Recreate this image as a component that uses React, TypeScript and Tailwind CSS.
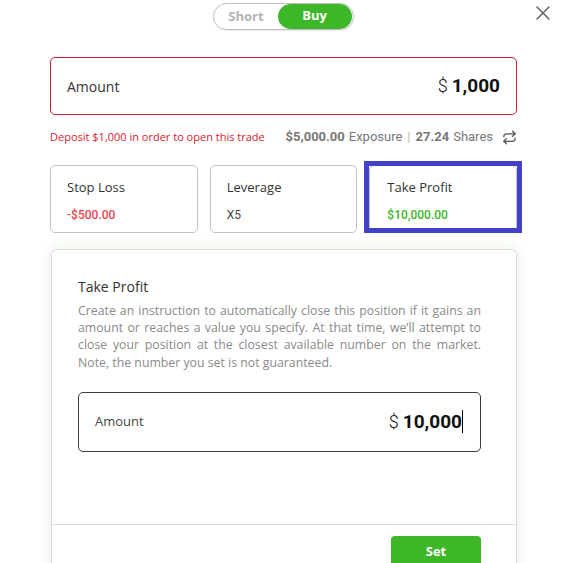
import React from "react";

const OS = { fontFamily: '"Open Sans", "Liberation Sans", sans-serif' };
const RB = { fontFamily: 'Roboto, "Liberation Sans", sans-serif' };

function RepeatIcon() {
  return (
    <svg width="15" height="15" viewBox="0 0 24 24" fill="none" stroke="#555" strokeWidth="2" strokeLinecap="round" strokeLinejoin="round">
      <path d="m17 2 4 4-4 4" />
      <path d="M3 11v-1a4 4 0 0 1 4-4h14" />
      <path d="m7 22-4-4 4-4" />
      <path d="M21 13v1a4 4 0 0 1-4 4H3" />
    </svg>
  );
}

export default function App() {
  return (
    <div className="relative w-[561px] h-[563px] overflow-hidden bg-white" style={OS}>
      {/* close */}
      <button className="absolute left-[534px] top-[4px] w-[18px] h-[18px] flex items-center justify-center">
        <svg width="16" height="16" viewBox="0 0 16 16" fill="none" stroke="#6b6b6b" strokeWidth="1.6" strokeLinecap="round">
          <path d="M2 2 14 14" />
          <path d="M14 2 2 14" />
        </svg>
      </button>

      {/* toggle */}
      <div className="flex justify-center pt-[3px] pl-[5px]">
        <div className="flex items-center w-[141px] h-[27px] rounded-full border border-[#bdbdbd] p-[1px] shadow-[0_1px_1px_rgba(0,0,0,0.08)]">
          <div className="flex-1 text-center text-[13px] font-bold text-[#b3b3b3]">Short</div>
          <div className="w-[74px] h-[25px] -mt-[1px] rounded-full bg-[#3db727] flex items-center justify-center text-[13px] font-bold text-white">Buy</div>
        </div>
      </div>

      <div className="pl-[50px] w-[517px]">
        {/* amount */}
        <div className="mt-[27px] h-[58px] rounded-[5px] border border-[#cc1f36] flex items-center justify-between pl-[16px] pr-[16px]">
          <span className="text-[14px] text-[#333]">Amount</span>
          <span className="flex items-baseline text-[#111]" style={RB}>
            <span className="text-[18px] font-light mr-[4px]">$</span>
            <span className="text-[19px] font-bold">1,000</span>
          </span>
        </div>

        {/* info row */}
        <div className="mt-[12px] h-[20px] flex items-center justify-between">
          <span className="text-[11px] text-[#d8192f]">Deposit $1,000 in order to open this trade</span>
          <span className="flex items-center text-[13px] text-[#777]" style={RB}>
            <span className="font-bold">$5,000.00</span>
            <span className="ml-[4px]">Exposure</span>
            <span className="mx-[5px] text-[#bbb]">|</span>
            <span className="font-bold">27.24</span>
            <span className="ml-[4px]">Shares</span>
            <span className="ml-[9px] flex items-center"><RepeatIcon /></span>
          </span>
        </div>

        {/* cards */}
        <div className="mt-[18px] grid grid-cols-3 gap-[12px]">
          <div className="h-[68px] rounded-[5px] border border-[#c4c4c4] pl-[16px] pt-[11px]">
            <div className="text-[13px] text-[#333] leading-[20px]">Stop Loss</div>
            <div className="mt-[9px] text-[12px] font-medium text-[#ec3f4c]" style={RB}>-$500.00</div>
          </div>
          <div className="h-[68px] rounded-[5px] border border-[#c4c4c4] pl-[16px] pt-[11px]">
            <div className="text-[13px] text-[#333] leading-[20px]">Leverage</div>
            <div className="mt-[9px] text-[12px] text-[#444]" style={RB}>X5</div>
          </div>
          <div className="relative h-[68px] rounded-[5px] border border-[#c4c4c4] pl-[17px] pt-[11px]">
            <div className="text-[13px] text-[#333] leading-[20px]">Take Profit</div>
            <div className="mt-[9px] text-[12px] font-medium text-[#3db727]" style={RB}>$10,000.00</div>
            <span className="pointer-events-none absolute -left-[6px] -right-[6px] -top-[5px] -bottom-[1px] border-[5px] border-[#4141c9]" />
          </div>
        </div>

        {/* panel */}
        <div className="mt-[16px] ml-[1px] h-[330px] rounded-t-[6px] border border-[#dcdcdc] bg-white shadow-[0_0_10px_4px_rgba(140,190,120,0.13)]">
          <div className="pl-[26px] pr-[35px] pt-[27px]">
            <div className="text-[14px] leading-[20px] text-[#333]">Take Profit</div>
            <p className="mt-[5px] text-[12.3px] leading-[17.2px] text-[#8a8a8a] text-justify">
              Create an instruction to automatically close this position if it gains an amount or reaches a value you specify. At that time, we’ll attempt to close your position at the closest available number on the market. Note, the number you set is not guaranteed.
            </p>
            <div className="mt-[21px] h-[60px] rounded-[5px] border border-[#3a3a3a] flex items-center justify-between pl-[16px] pr-[17px]">
              <span className="text-[13px] text-[#444]">Amount</span>
              <span className="flex items-baseline text-[#111]" style={RB}>
                <span className="text-[18px] font-light mr-[4px]">$</span>
                <span className="text-[19px] font-bold">10,000</span>
                <span className="inline-block w-[1px] h-[23px] bg-black self-center" />
              </span>
            </div>
          </div>
          <div className="mt-[72px] border-t border-[#dcdcdc] flex justify-end pr-[35px] pt-[11px]">
            <button className="w-[90px] h-[36px] rounded-[4px] bg-[#3db727] text-white text-[13px] font-bold leading-[18px] pt-[6px] flex justify-center items-start">Set</button>
          </div>
        </div>
      </div>
    </div>
  );
}
